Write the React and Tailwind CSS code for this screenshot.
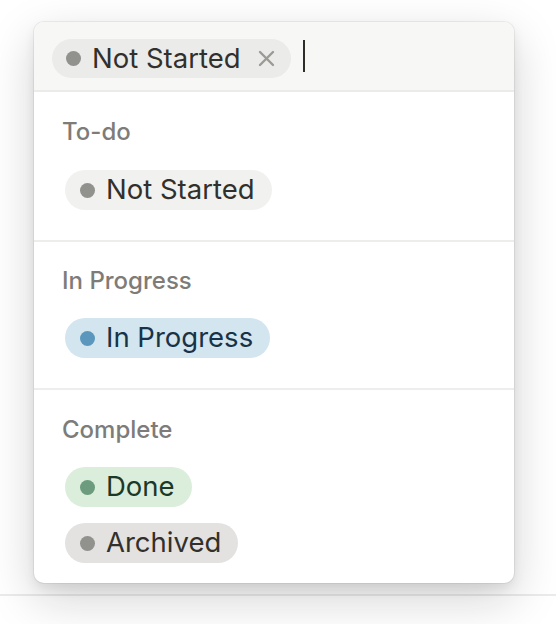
import React from "react";

function Pill({ label, bg, dot, text }) {
  return (
    <div className={`flex h-[40px] items-center self-start rounded-full pl-[15px] pr-[17px] ${bg}`}>
      <span className={`h-[15px] w-[15px] rounded-full ${dot}`} />
      <span className={`ml-[11px] text-[27.5px] leading-none ${text}`}>{label}</span>
    </div>
  );
}

function Section({ title, children, pad, gap }) {
  return (
    <div className={`flex flex-col px-[28px] ${pad}`}>
      <div className="text-[24px] leading-[28px] font-medium text-[#7d7c78]">{title}</div>
      <div className={`ml-[3px] flex flex-col gap-[16px] ${gap}`}>{children}</div>
    </div>
  );
}

export default function App() {
  return (
    <div className="relative h-[624px] w-[556px] overflow-hidden bg-white font-['Inter','Noto_Sans',sans-serif] antialiased">
      <div className="pt-[594px]">
        <div className="h-[2px] bg-[#ebebea]" />
      </div>

      <div className="absolute left-[34px] top-[22px] w-[480px] overflow-hidden rounded-[10px] bg-white shadow-[0_0_0_1px_rgba(15,15,15,0.06),0_6px_12px_rgba(15,15,15,0.08),0_16px_48px_rgba(15,15,15,0.18)]">
        <div className="flex h-[70px] items-start border-b-2 border-[#ebebea] bg-[#f7f7f5] pl-[18px] pt-[17px]">
          <div className="flex h-[39px] items-center rounded-full bg-[#ebebe9] pl-[14px] pr-[16px]">
            <span className="h-[15px] w-[15px] rounded-full bg-[#91918e]" />
            <span className="ml-[11px] text-[27.5px] leading-none text-[#32302c]">Not Started</span>
            <svg className="ml-[17px]" width="17" height="17" viewBox="0 0 17 17" fill="none">
              <path d="M2 2L15 15M15 2L2 15" stroke="#9b9a97" strokeWidth="2.4" strokeLinecap="round" />
            </svg>
          </div>
          <div className="ml-[12px] mt-[1px] h-[32px] w-[2px] bg-[#2f2d28]" />
        </div>

        <Section title="To-do" pad="pt-[26px] pb-[30px] border-b-2 border-[#ededec]" gap="mt-[24px]">
          <Pill label="Not Started" bg="bg-[#f1f1ef]" dot="bg-[#91918e]" text="text-[#32302c]" />
        </Section>
        <Section title="In Progress" pad="pt-[25px] pb-[30px] border-b-2 border-[#ededec]" gap="mt-[23px]">
          <Pill label="In Progress" bg="bg-[#d3e5ef]" dot="bg-[#5b97bd]" text="text-[#183347]" />
        </Section>
        <Section title="Complete" pad="pt-[26px] pb-[20px]" gap="mt-[23px]">
          <Pill label="Done" bg="bg-[#dbeddb]" dot="bg-[#6c9b7d]" text="text-[#1c3829]" />
          <Pill label="Archived" bg="bg-[#e3e2e0]" dot="bg-[#91918e]" text="text-[#32302c]" />
        </Section>
      </div>
    </div>
  );
}
